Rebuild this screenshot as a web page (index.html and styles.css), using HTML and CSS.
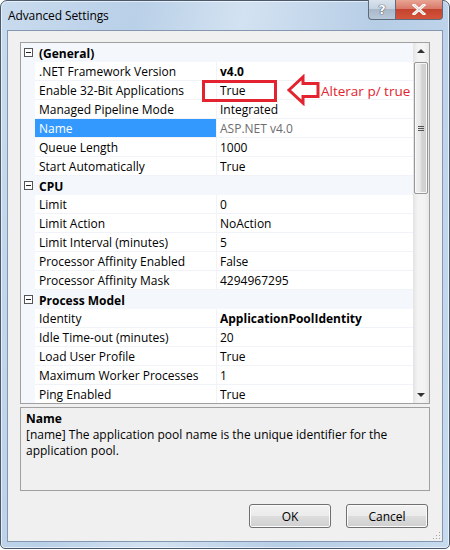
FILE: index.html
```html
<!DOCTYPE html>
<html lang="en">
<head>
  <meta charset="UTF-8">
  <title>Advanced Settings</title>
  <link rel="stylesheet" href="styles.css">
</head>
<body>
  <div class="window">
    <!-- Title bar -->
    <div class="titlebar">
      <span class="title">Advanced Settings</span>
      <div class="caption-buttons">
        <div class="cap-btn help">?</div>
        <div class="cap-btn close">
          <svg width="14" height="11" viewBox="0 0 14 11"><path d="M2 1 L12 10 M12 1 L2 10" stroke="#fff" stroke-width="3" stroke-linecap="square"/><path d="M2 1 L12 10 M12 1 L2 10" stroke="#5a1a10" stroke-width="0.6" fill="none" opacity="0.4"/></svg>
        </div>
      </div>
    </div>

    <div class="client">
      <!-- Property grid -->
      <div class="grid">
        <div class="rows">
          <div class="cat"><span class="toggle"></span><span class="cat-name">(General)</span></div>
          <div class="row"><span class="gut"></span><span class="name">.NET Framework Version</span><span class="val bold">v4.0</span></div>
          <div class="row"><span class="gut"></span><span class="name">Enable 32-Bit Applications</span><span class="val">True</span></div>
          <div class="row"><span class="gut"></span><span class="name">Managed Pipeline Mode</span><span class="val">Integrated</span></div>
          <div class="row"><span class="gut"></span><span class="name selected">Name</span><span class="val muted">ASP.NET v4.0</span></div>
          <div class="row"><span class="gut"></span><span class="name">Queue Length</span><span class="val">1000</span></div>
          <div class="row"><span class="gut"></span><span class="name">Start Automatically</span><span class="val">True</span></div>
          <div class="cat"><span class="toggle"></span><span class="cat-name">CPU</span></div>
          <div class="row"><span class="gut"></span><span class="name">Limit</span><span class="val">0</span></div>
          <div class="row"><span class="gut"></span><span class="name">Limit Action</span><span class="val">NoAction</span></div>
          <div class="row"><span class="gut"></span><span class="name">Limit Interval (minutes)</span><span class="val">5</span></div>
          <div class="row"><span class="gut"></span><span class="name">Processor Affinity Enabled</span><span class="val">False</span></div>
          <div class="row"><span class="gut"></span><span class="name">Processor Affinity Mask</span><span class="val">4294967295</span></div>
          <div class="cat"><span class="toggle"></span><span class="cat-name">Process Model</span></div>
          <div class="row"><span class="gut"></span><span class="name">Identity</span><span class="val bold">ApplicationPoolIdentity</span></div>
          <div class="row"><span class="gut"></span><span class="name">Idle Time-out (minutes)</span><span class="val">20</span></div>
          <div class="row"><span class="gut"></span><span class="name">Load User Profile</span><span class="val">True</span></div>
          <div class="row"><span class="gut"></span><span class="name">Maximum Worker Processes</span><span class="val">1</span></div>
          <div class="row"><span class="gut"></span><span class="name">Ping Enabled</span><span class="val">True</span></div>
        </div>
        <div class="scrollbar">
          <div class="arrow up"></div>
          <div class="track">
            <div class="thumb"><span class="grip"></span></div>
          </div>
          <div class="arrow down"></div>
        </div>
      </div>

      <!-- Description panel -->
      <div class="desc">
        <div class="desc-title">Name</div>
        <div class="desc-text">[name] The application pool name is the unique identifier for the application pool.</div>
      </div>

      <div class="buttons">
        <button class="btn">OK</button>
        <button class="btn">Cancel</button>
      </div>
      <div class="grip-corner"></div>

      <!-- Annotation drawn over the screenshot -->
      <div class="mark-box"></div>
      <svg class="mark-arrow" width="34" height="32" viewBox="0 0 34 32">
        <polygon points="2,16 16,3 16,9.5 31,9.5 31,22.5 16,22.5 16,29" fill="#fff" stroke="#e32330" stroke-width="3" stroke-linejoin="miter"/>
      </svg>
      <span class="mark-text">Alterar p/ true</span>
    </div>
  </div>
</body>
</html>
```

FILE: styles.css
```css
body {
  margin: 0;
  background: #fff;
  font-family: "Open Sans", "Noto Sans", sans-serif;
  font-size: 12px;
  color: #000;
}
.window {
  position: relative;
  width: 448px;
  height: 547px;
  border: 1px solid #4a5a6c;
  border-radius: 7px 7px 5px 5px;
  background: linear-gradient(100deg, #c9dbee 0%, #b9d0e8 25%, #d3e2f1 45%, #b6cde6 70%, #c8dbee 100%);
  display: flex;
  flex-direction: column;
  box-shadow: inset 0 0 0 1px rgba(255, 255, 255, 0.6);
}
.titlebar {
  height: 29px;
  display: flex;
  align-items: flex-start;
  justify-content: space-between;
}
.title {
  margin: 6px 0 0 7px;
  font-size: 12px;
  letter-spacing: -0.1px;
  color: #000;
}
.caption-buttons {
  display: flex;
  margin-right: 6px;
  margin-top: -1px;
}
.cap-btn {
  height: 19px;
  border: 1px solid #5d6b7c;
  border-top: none;
  display: flex;
  align-items: center;
  justify-content: center;
}
.help {
  width: 26px;
  border-radius: 0 0 0 4px;
  border-right: none;
  background: linear-gradient(#d9e3ee 0%, #c6d3e0 45%, #a9b9ca 50%, #b8c8d8 100%);
  color: #fff;
  font-family: "DejaVu Sans", sans-serif;
  font-weight: bold;
  font-size: 13px;
  text-shadow: 0 0 1px #334, 0 0 1px #334;
}
.close {
  width: 46px;
  border-radius: 0 0 4px 0;
  background: linear-gradient(#e8a493 0%, #d9796a 45%, #c4432f 50%, #d3543a 100%);
}
.client {
  position: relative;
  margin: 0 6px 0 6px;
  height: 512px;
  border: 1px solid #8398b0;
  background: #f0f0f0;
  display: flex;
  flex-direction: column;
  padding: 11px 12px 0 12px;
  box-sizing: border-box;
}
.grid {
  display: flex;
  height: 362px;
  border: 1px solid #a0a0a0;
  background: #fff;
  box-sizing: border-box;
}
.rows {
  width: 392px;
  overflow: hidden;
  background: #f0f3f8;
}
.cat, .row {
  display: flex;
  height: 19px;
}
.cat {
  align-items: center;
  background: #f4f7fc;
}
.toggle {
  width: 7px;
  height: 7px;
  margin-left: 3px;
  margin-right: 6px;
  border: 1px solid #555;
  position: relative;
  background: #fff;
}
.toggle::after {
  content: "";
  position: absolute;
  left: 1px;
  top: 3px;
  width: 5px;
  height: 1px;
  background: #222;
}
.cat-name {
  font-weight: bold;
  line-height: 19px;
  padding-top: 2px;
}
.gut {
  width: 14px;
  background: #f4f7fc;
}
.name, .val {
  height: 18px;
  line-height: 20px;
  background: #fff;
  white-space: nowrap;
  overflow: hidden;
}
.name {
  width: 177px;
  padding-left: 4px;
  margin-right: 1px;
}
.val {
  flex: 1;
  padding-left: 3px;
}
.selected {
  background: #3399ff;
  color: #fff;
}
.bold {
  font-weight: bold;
}
.muted {
  color: #6d6d6d;
}
.scrollbar {
  width: 16px;
  display: flex;
  flex-direction: column;
  background: linear-gradient(90deg, #e3e3e3, #f3f3f3 30%, #f3f3f3 70%, #e8e8e8);
}
.arrow {
  height: 18px;
  position: relative;
}
.arrow::after {
  content: "";
  position: absolute;
  left: 4px;
  border-left: 4px solid transparent;
  border-right: 4px solid transparent;
}
.up::after {
  top: 6px;
  border-bottom: 4px solid #333;
}
.down::after {
  top: 8px;
  border-top: 4px solid #333;
}
.track {
  flex: 1;
}
.thumb {
  height: 130px;
  margin: 1px 1px 0 1px;
  border: 1px solid #979797;
  border-radius: 2px;
  background: linear-gradient(90deg, #f2f2f2, #e6e6e6 45%, #d4d4d4 55%, #cfcfcf);
  display: flex;
  align-items: center;
  justify-content: center;
  box-shadow: inset 0 0 0 1px #f8f8f8;
}
.grip {
  width: 6px;
  height: 5px;
  background: repeating-linear-gradient(#555 0 1px, transparent 1px 2px);
}
.desc {
  margin-top: 3px;
  height: 84px;
  border: 1px solid #a0a0a0;
  box-sizing: border-box;
  padding: 2px 0 0 5px;
}
.desc-title {
  font-weight: bold;
  line-height: 17px;
}
.desc-text {
  line-height: 16px;
  width: 385px;
}
.buttons {
  display: flex;
  justify-content: flex-end;
  gap: 15px;
  margin-top: 13px;
  padding-right: 2px;
}
.btn {
  width: 82px;
  height: 24px;
  border: 1px solid #707070;
  border-radius: 3px;
  background: linear-gradient(#f2f2f2 0%, #ebebeb 48%, #dddddd 52%, #cfcfcf 100%);
  box-shadow: inset 0 0 0 1px #fcfcfc;
  font-family: "Open Sans", "Noto Sans", sans-serif;
  font-size: 12px;
  color: #000;
  padding: 0;
}
.grip-corner {
  position: absolute;
  right: 2px;
  bottom: 2px;
  width: 8px;
  height: 8px;
  background: radial-gradient(circle, #a6a6a6 0.7px, transparent 1px) 0 0 / 3px 3px;
  clip-path: polygon(100% 0, 100% 100%, 0 100%);
}
.mark-box {
  position: absolute;
  left: 194px;
  top: 49px;
  width: 69px;
  height: 16px;
  border: 3px solid #e32330;
}
.mark-arrow {
  position: absolute;
  left: 279px;
  top: 43px;
}
.mark-text {
  position: absolute;
  left: 313px;
  top: 51px;
  font-size: 13.5px;
  color: #e32330;
}
```
